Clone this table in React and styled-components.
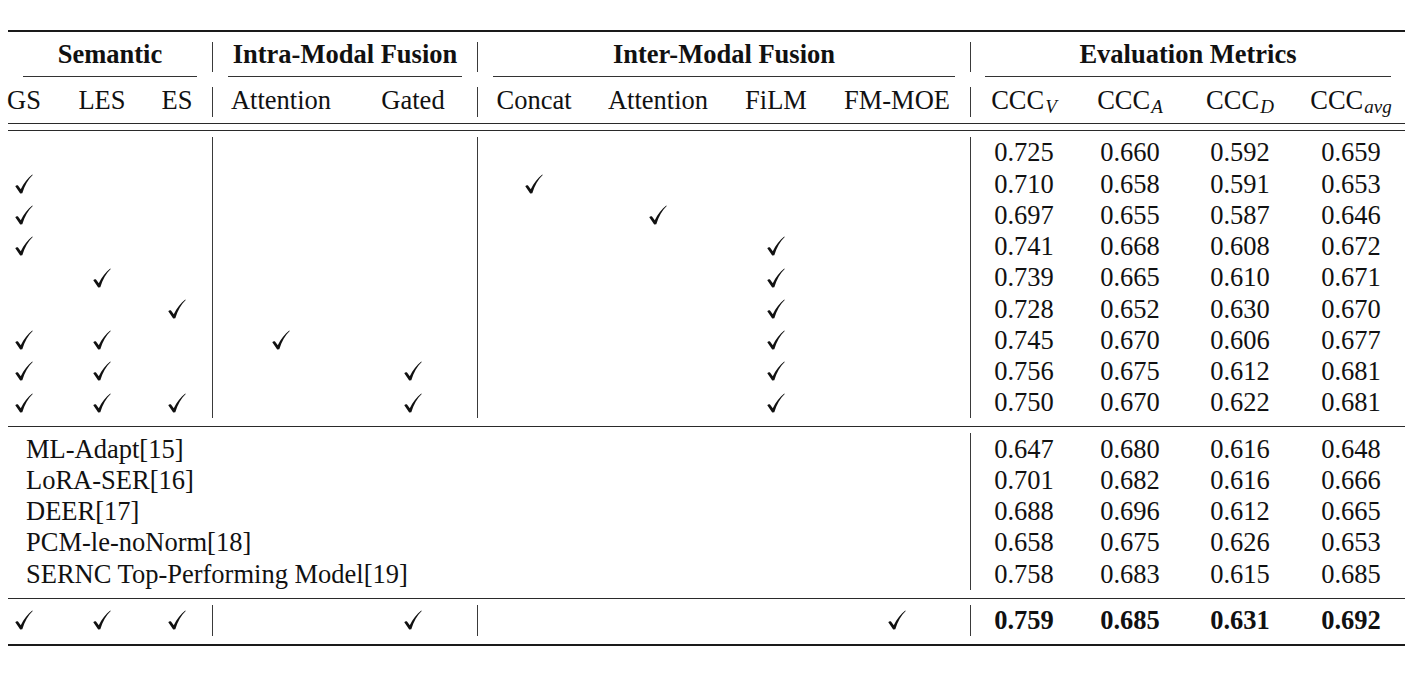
import styled, { createGlobalStyle } from "styled-components";

const GlobalStyle = createGlobalStyle`
  html, body {
    margin: 0;
    padding: 0;
    background: #ffffff;
  }
  body {
    font-family: "Liberation Serif", "Times New Roman", serif;
    color: #111;
  }
`;

// column tracks, named so cells can be placed by name
const COLS = `[gs] 32px [les] 124px [es] 26px 22px [v1] 1px [ia] 136px [gated] 128px [v2] 1px [concat] 112px [ie] 136px [film] 100px [moe] 142px 2px [v3] 1px [cv] 106px [ca] 106px [cd] 114px [cavg] 108px [end]`;

const Page = styled.div`
  padding-top: 30px;
`;

const Table = styled.div`
  width: 1397px;
  margin-left: 8px;
  font-size: 26.5px;
`;

const Header = styled.div`
  border-top: 2px solid #1a1a1a;
  border-bottom: 1px solid #2a2a2a;
  margin-bottom: 6px;
`;

const Row = styled.div`
  display: grid;
  grid-template-columns: ${COLS};
  grid-template-rows: ${(p) => p.$h || "31.25px"};
  align-items: center;
  line-height: 1;
`;

const Block = styled.div`
  border-top: ${(p) => (p.$first ? "1px solid #2a2a2a" : "none")};
  border-bottom: ${(p) => p.$bottom || "1px solid #2a2a2a"};
  padding: 6px 0 ${(p) => p.$padBottom || "8px"};
`;

const Cell = styled.div`
  grid-column: ${(p) => p.$col};
  grid-row: 1;
  justify-self: center;
  white-space: nowrap;
  font-weight: ${(p) => (p.$bold ? 700 : 400)};
`;

const GroupTitle = styled(Cell)`
  font-weight: 700;
`;

const Label = styled.div`
  grid-column: gs / v3;
  grid-row: 1;
  justify-self: start;
  padding-left: 18px;
  white-space: nowrap;
`;

const CmidRule = styled.div`
  grid-column: ${(p) => p.$col};
  grid-row: 1;
  align-self: stretch;
  margin: 0 ${(p) => p.$trim || "15px"};
  background: #333;
`;

const VRule = styled.div`
  grid-column: ${(p) => p.$col};
  grid-row: 1;
  align-self: stretch;
  width: 1px;
  background: #3a3a3a;
  margin: ${(p) => p.$margin || "0"};
`;

const Sub = styled.sub`
  font-style: italic;
  font-size: 19px;
  vertical-align: -4px;
  line-height: 0;
  margin-left: 1px;
`;

const CheckSvg = styled.svg`
  width: 18px;
  height: 20px;
  display: block;
`;

function Check() {
  return (
    <CheckSvg viewBox="0 0 18 20">
      <path
        d="M0.3 12.2 C1.2 11.2 2.4 11 3.2 11.8 L5.8 15.2 C8.8 9.2 12.6 4 17.3 0.5 L17.7 1.1 C13.3 5.4 9.6 11.4 7.3 19.3 L5.2 19.6 Z"
        fill="#111"
      />
    </CheckSvg>
  );
}

const ablation = [
  { checks: [], v: ["0.725", "0.660", "0.592", "0.659"] },
  { checks: ["gs", "concat"], v: ["0.710", "0.658", "0.591", "0.653"] },
  { checks: ["gs", "ie"], v: ["0.697", "0.655", "0.587", "0.646"] },
  { checks: ["gs", "film"], v: ["0.741", "0.668", "0.608", "0.672"] },
  { checks: ["les", "film"], v: ["0.739", "0.665", "0.610", "0.671"] },
  { checks: ["es", "film"], v: ["0.728", "0.652", "0.630", "0.670"] },
  { checks: ["gs", "les", "ia", "film"], v: ["0.745", "0.670", "0.606", "0.677"] },
  { checks: ["gs", "les", "gated", "film"], v: ["0.756", "0.675", "0.612", "0.681"] },
  { checks: ["gs", "les", "es", "gated", "film"], v: ["0.750", "0.670", "0.622", "0.681"] },
];

const baselines = [
  { name: "ML-Adapt[15]", v: ["0.647", "0.680", "0.616", "0.648"] },
  { name: "LoRA-SER[16]", v: ["0.701", "0.682", "0.616", "0.666"] },
  { name: "DEER[17]", v: ["0.688", "0.696", "0.612", "0.665"] },
  { name: "PCM-le-noNorm[18]", v: ["0.658", "0.675", "0.626", "0.653"] },
  { name: "SERNC Top-Performing Model[19]", v: ["0.758", "0.683", "0.615", "0.685"] },
];

const final = { checks: ["gs", "les", "es", "gated", "moe"], v: ["0.759", "0.685", "0.631", "0.692"] };

const metricCols = ["cv", "ca", "cd", "cavg"];

function Values({ v, bold }) {
  return v.map((x, i) => (
    <Cell key={metricCols[i]} $col={metricCols[i]} $bold={bold}>
      {x}
    </Cell>
  ));
}

function AblationRow({ row, bold, rules }) {
  return (
    <Row>
      {row.checks.map((c) => (
        <Cell key={c} $col={c}>
          <Check />
        </Cell>
      ))}
      {rules.map((r) => (
        <VRule key={r} $col={r} />
      ))}
      <Values v={row.v} bold={bold} />
    </Row>
  );
}

export default function App() {
  return (
    <Page>
      <GlobalStyle />
      <Table>
        <Header>
          <Row $h="44px">
            <GroupTitle $col="gs / v1">Semantic</GroupTitle>
            <VRule $col="v1" $margin="10px 0 4px" />
            <GroupTitle $col="ia / v2">Intra-Modal Fusion</GroupTitle>
            <VRule $col="v2" $margin="10px 0 4px" />
            <GroupTitle $col="concat / v3">Inter-Modal Fusion</GroupTitle>
            <VRule $col="v3" $margin="10px 0 4px" />
            <GroupTitle $col="cv / end">Evaluation Metrics</GroupTitle>
          </Row>
          <Row $h="1px">
            <CmidRule $col="gs / v1" />
            <CmidRule $col="ia / v2" />
            <CmidRule $col="concat / v3" />
            <CmidRule $col="cv / end" $trim="14px" />
          </Row>
          <Row $h="46px">
            <Cell $col="gs">GS</Cell>
            <Cell $col="les">LES</Cell>
            <Cell $col="es">ES</Cell>
            <VRule $col="v1" $margin="10px 0 6px" />
            <Cell $col="ia">Attention</Cell>
            <Cell $col="gated">Gated</Cell>
            <VRule $col="v2" $margin="10px 0 6px" />
            <Cell $col="concat">Concat</Cell>
            <Cell $col="ie">Attention</Cell>
            <Cell $col="film">FiLM</Cell>
            <Cell $col="moe">FM-MOE</Cell>
            <VRule $col="v3" $margin="10px 0 6px" />
            <Cell $col="cv">
              CCC<Sub>V</Sub>
            </Cell>
            <Cell $col="ca">
              CCC<Sub>A</Sub>
            </Cell>
            <Cell $col="cd">
              CCC<Sub>D</Sub>
            </Cell>
            <Cell $col="cavg">
              CCC<Sub>avg</Sub>
            </Cell>
          </Row>
        </Header>

        <Block $first>
          {ablation.map((row, i) => (
            <AblationRow key={i} row={row} rules={["v1", "v2", "v3"]} />
          ))}
        </Block>

        <Block>
          {baselines.map((b) => (
            <Row key={b.name}>
              <Label>{b.name}</Label>
              <VRule $col="v3" />
              <Values v={b.v} />
            </Row>
          ))}
        </Block>

        <Block $bottom="2px solid #1a1a1a" $padBottom="8.5px">
          <AblationRow row={final} bold rules={["v1", "v2", "v3"]} />
        </Block>
      </Table>
    </Page>
  );
}
